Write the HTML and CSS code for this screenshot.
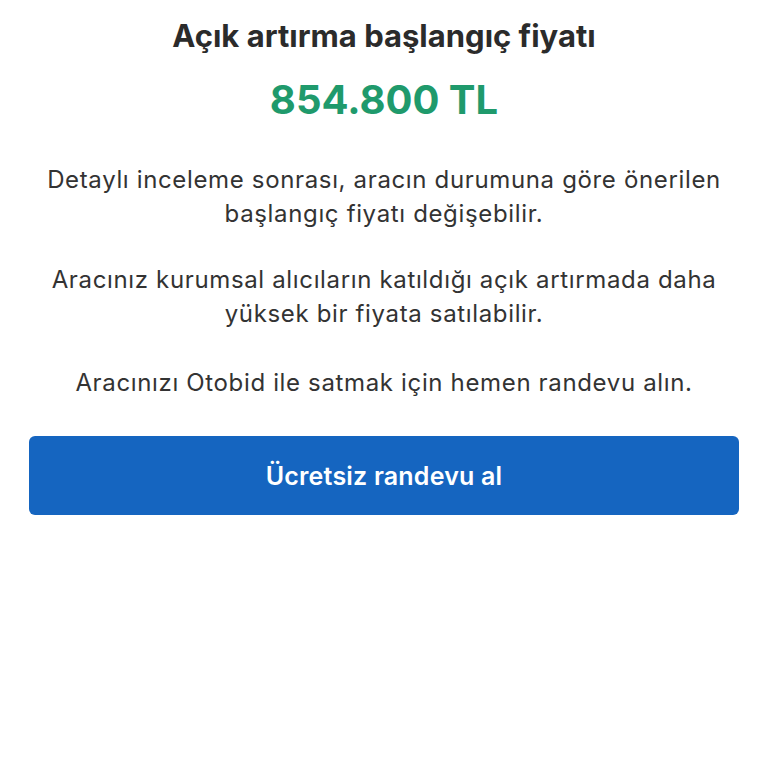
FILE: index.html
```html
<!DOCTYPE html>
<html lang="tr">
<head>
    <meta charset="UTF-8">
    <meta name="viewport" content="width=device-width, initial-scale=1.0">
    <title>Açık artırma başlangıç fiyatı</title>
    <link rel="stylesheet" href="styles.css">
</head>
<body>
    <div class="container">
        <h1 class="title">Açık artırma başlangıç fiyatı</h1>
        <div class="price">854.800 TL</div>
        <p class="info">Detaylı inceleme sonrası, aracın durumuna göre önerilen başlangıç fiyatı değişebilir.</p>
        <p class="info">Aracınız kurumsal alıcıların katıldığı açık artırmada daha yüksek bir fiyata satılabilir.</p>
        <p class="info info-last">Aracınızı Otobid ile satmak için hemen randevu alın.</p>
        <button class="cta-button">Ücretsiz randevu al</button>
    </div>
</body>
</html>
```

FILE: styles.css
```css
body {
    font-family: Inter, Roboto, Arial, sans-serif;
    background-color: #fff;
    color: #333;
    margin: 0;
    padding: 0;
    text-align: center;
}
.container {
    padding: 14px 29px 0;
    display: flex;
    flex-direction: column;
    align-items: stretch;
}
.title {
    font-size: 31px;
    font-weight: 700;
    color: #2b2b2b;
    margin: 0;
    line-height: 44px;
}
.price {
    font-size: 40px;
    font-weight: 700;
    color: #1f9a6c;
    margin-top: 18px;
    line-height: 48px;
}
.info {
    font-size: 24px;
    line-height: 34px;
    color: #333;
    margin: 39px 0 0;
    letter-spacing: 0.65px;
}
.info + .info {
    margin-top: 32px;
}
.info-last {
    margin-top: 35px !important;
}
.cta-button {
    margin-top: 36px;
    height: 79px;
    background-color: #1565c0;
    color: #fff;
    border: none;
    border-radius: 6px;
    font-family: Inter, Roboto, Arial, sans-serif;
    font-size: 25px;
    font-weight: 600;
    letter-spacing: 0.2px;
    cursor: pointer;
}
```
